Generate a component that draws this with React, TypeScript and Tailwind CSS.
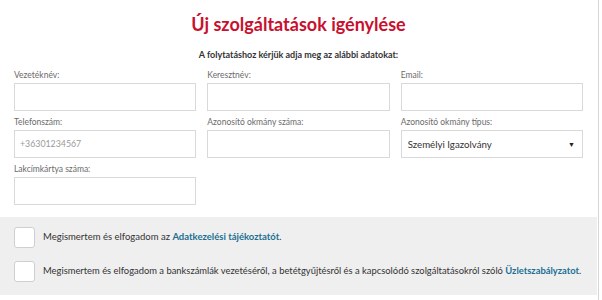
import React from "react";

const font = { fontFamily: "Lato, 'Open Sans', sans-serif" };

function Field({ label, children }: { label: string; children?: React.ReactNode }) {
  return (
    <div className="flex flex-col">
      <div className="h-[12px] text-[8.5px] leading-[12px] text-[#6b6b6b] mb-[2px] whitespace-nowrap">{label}</div>
      {children ?? <div className="h-[28px] border border-[#d9d9d9] bg-white" />}
    </div>
  );
}

export default function App() {
  return (
    <div className="flex w-[602px] h-[300px] bg-white overflow-hidden" style={font}>
      <div className="w-[597px] flex flex-col">
        <h1 className="pt-[12px] h-[36px] text-center text-[18px] leading-[24px] font-bold text-[#c8102e]">
          Új szolgáltatások igénylése
        </h1>
        <p className="mt-[12px] text-center text-[9px] leading-[14px] font-bold text-[#333]">
          A folytatáshoz kérjük adja meg az alábbi adatokat:
        </p>
        <div className="mt-[7px] px-[14px] grid grid-cols-3 gap-x-[11px] gap-y-[5px]">
          <Field label="Vezetéknév:" />
          <Field label="Keresztnév:" />
          <Field label="Email:" />
          <Field label="Telefonszám:">
            <div className="h-[28px] border border-[#d9d9d9] bg-white flex items-center pl-[5px] text-[8.8px] text-[#9a9a9a]">
              +36301234567
            </div>
          </Field>
          <Field label="Azonosító okmány száma:" />
          <Field label="Azonosító okmány típus:">
            <div className="h-[28px] border border-[#d9d9d9] bg-white flex items-center justify-between pl-[6px] pr-[7px] text-[9.7px] text-[#333]">
              <span>Személyi Igazolvány</span>
              <span className="text-[7px] text-[#222]">▼</span>
            </div>
          </Field>
          <Field label="Lakcímkártya száma:" />
        </div>
        <div className="mt-[12px] bg-[#efefef] px-[14px] pt-[10px] pb-[13px] flex flex-col gap-[13px]">
          <div className="flex items-center gap-[8px]">
            <div className="w-[21px] h-[21px] shrink-0 rounded-[3px] border border-[#cfcfcf] bg-white" />
            <span className="text-[9.5px] text-[#333] whitespace-nowrap">
              Megismertem és elfogadom az <a className="font-bold text-[#1b6f93]">Adatkezelési tájékoztatót</a>.
            </span>
          </div>
          <div className="flex items-center gap-[8px]">
            <div className="w-[21px] h-[21px] shrink-0 rounded-[3px] border border-[#cfcfcf] bg-white" />
            <span className="text-[9.4px] text-[#333] whitespace-nowrap">
              Megismertem és elfogadom a bankszámlák vezetéséről, a betétgyűjtésről és a kapcsolódó szolgáltatásokról szóló{" "}
              <a className="font-bold text-[#1b6f93]">Üzletszabályzatot</a>.
            </span>
          </div>
        </div>
      </div>
      <div className="w-px" />
      <div className="w-px bg-[#d6d6d6]" />
    </div>
  );
}
